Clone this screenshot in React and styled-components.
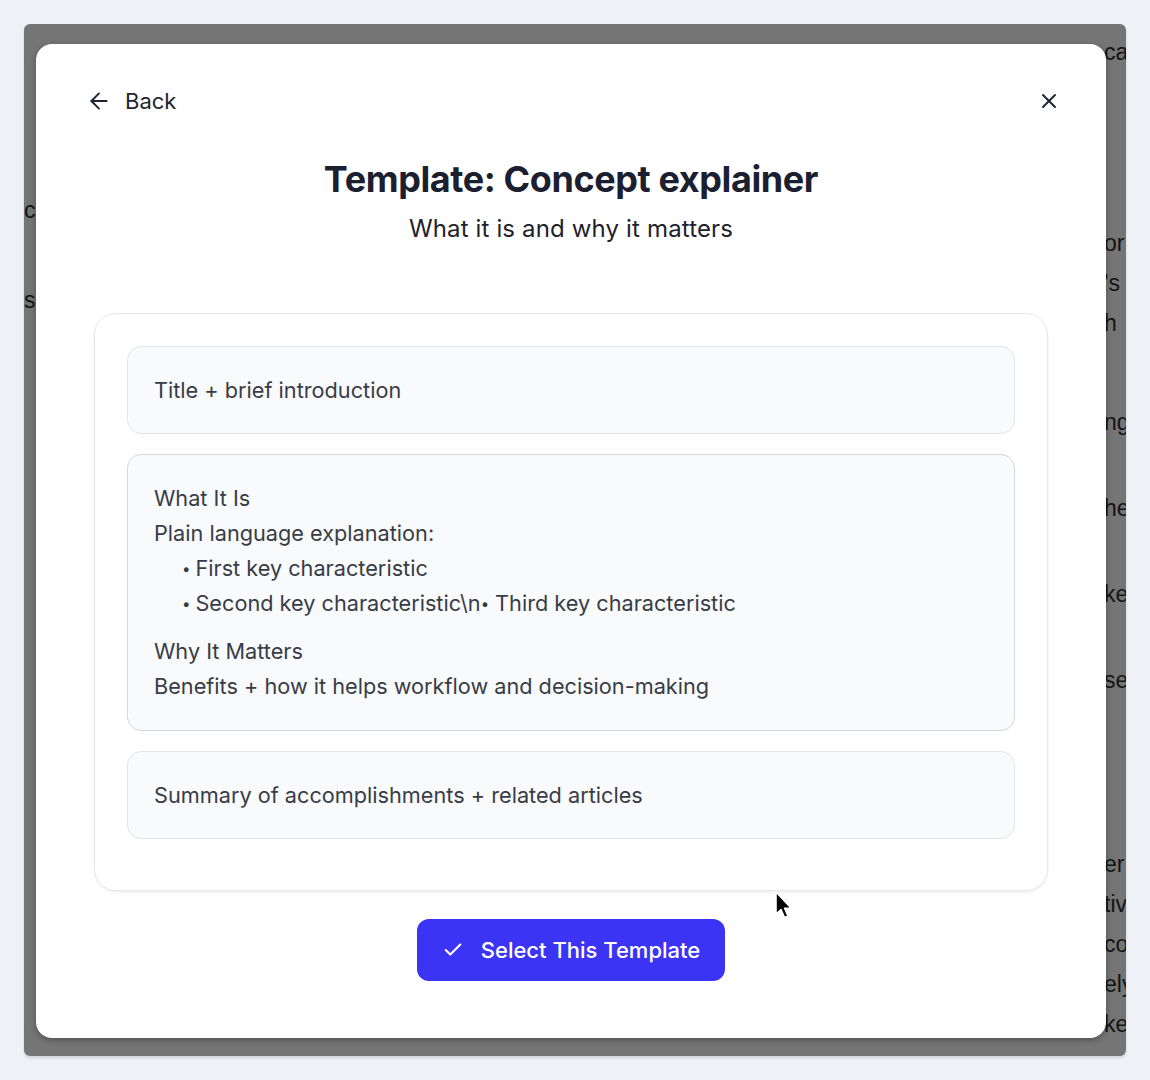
import React from 'react';
import styled, { createGlobalStyle } from 'styled-components';
import { ArrowLeft, X, Check } from 'lucide-react';

const GlobalStyle = createGlobalStyle`
  body {
    margin: 0;
    background: #eef2f7;
    font-family: Inter, "Noto Sans", sans-serif;
  }
`;

const Page = styled.div`
  position: relative;
  height: 1080px;
  padding: 24px 24px 0;
  box-sizing: border-box;
`;

const Window = styled.div`
  position: relative;
  height: 1032px;
  border-radius: 6px;
  background: #757575;
  overflow: hidden;
  box-shadow: 0 2px 3px rgba(0, 0, 0, 0.12);
`;

// page behind the dimmed overlay, only its edges peek out
const Backdrop = styled.div`
  display: flex;
  justify-content: space-between;
  height: 100%;
  font-family: "Liberation Sans", Arial, sans-serif;
  font-size: 23px;
  color: #141414;
`;

const BackColumn = styled.div`
  display: flex;
  flex-direction: column;
  width: ${(p) => p.$width}px;
  margin: ${(p) => p.$margin};
  overflow: hidden;
`;

const BackLine = styled.div`
  height: 40px;
  line-height: 40px;
  margin-top: ${(p) => p.$gap || 0}px;
  white-space: nowrap;
`;

const Modal = styled.div`
  position: absolute;
  left: 12px;
  top: 20px;
  width: 1070px;
  height: 994px;
  box-sizing: border-box;
  background: #fff;
  border-radius: 16px;
  box-shadow: 0 2px 6px rgba(0, 0, 0, 0.3);
  padding: 36px 58px 0;
  display: flex;
  flex-direction: column;
  align-items: center;
`;

const Header = styled.div`
  align-self: stretch;
  display: flex;
  align-items: center;
  justify-content: space-between;
  height: 42px;
  margin: 0 -13px 0 -8px;
`;

const BackButton = styled.button`
  display: flex;
  align-items: center;
  gap: 13px;
  border: none;
  background: none;
  padding: 0;
  font-family: inherit;
  font-size: 22px;
  color: #1f2433;
  cursor: pointer;
`;

const CloseButton = styled.button`
  display: flex;
  border: none;
  background: none;
  padding: 0;
  color: #1f2433;
  cursor: pointer;
`;

const Title = styled.h1`
  margin: 35px 0 0;
  font-size: 36px;
  line-height: 44px;
  font-weight: 700;
  color: #1b2030;
  letter-spacing: -0.4px;
`;

const Subtitle = styled.p`
  margin: 13px 0 0;
  font-size: 24px;
  line-height: 30px;
  letter-spacing: 0.15px;
  color: #1f222a;
`;

const Card = styled.div`
  align-self: stretch;
  margin-top: 69px;
  padding: 32px 32px 51px;
  border: 1px solid #e5e7eb;
  border-radius: 22px;
  box-shadow: 0 2px 3px rgba(0, 0, 0, 0.06);
  display: flex;
  flex-direction: column;
  gap: 20px;
`;

const Section = styled.div`
  min-height: ${(p) => (p.$tall ? 'auto' : '86px')};
  padding: ${(p) => (p.$tall ? '26px 26px' : '0 26px')};
  display: flex;
  flex-direction: column;
  justify-content: center;
  background: #f9fafb;
  border: 1px solid ${(p) => (p.$active ? '#d4d7de' : '#e3e5ea')};
  border-radius: 14px;
  font-size: 21.7px;
  line-height: 35px;
  color: #383c47;
`;

const Line = styled.div`
  margin-top: ${(p) => p.$gap || 0}px;
  padding-left: ${(p) => (p.$bullet ? 28 : 0)}px;
`;

const Dot = styled.span`
  font-size: 15px;
  vertical-align: 2px;
  margin-right: ${(p) => (p.$tight ? 6 : 5)}px;
`;

const SelectButton = styled.button`
  margin-top: 28px;
  width: 308px;
  height: 62px;
  display: flex;
  align-items: center;
  justify-content: center;
  gap: 17px;
  border: none;
  border-radius: 12px;
  background: #3b34f5;
  color: #fff;
  font-family: inherit;
  font-size: 22px;
  font-weight: 500;
  cursor: pointer;
`;

const Cursor = styled.svg`
  position: absolute;
  left: 773px;
  top: 890px;
`;

const leftLines = [
  { text: 'c', gap: 166 },
  { text: 's', gap: 50 },
];

const rightLines = [
  { text: 'ca', gap: 8 },
  { text: 'or', gap: 151 },
  { text: "'s" },
  { text: 'h' },
  { text: 'ng', gap: 59 },
  { text: 'he', gap: 46 },
  { text: 'ke', gap: 46 },
  { text: 'se', gap: 46 },
  { text: 'er', gap: 144 },
  { text: 'tiv' },
  { text: 'co' },
  { text: 'ely' },
  { text: 'ke' },
];

const App = () => (
  <Page>
    <GlobalStyle />
    <Window>
      <Backdrop>
        <BackColumn $width={40} $margin="0 0 0 0">
          {leftLines.map((l, i) => (
            <BackLine key={i} $gap={l.gap}>
              {l.text}
            </BackLine>
          ))}
        </BackColumn>
        <BackColumn $width={60} $margin="0 -38px 0 0">
          {rightLines.map((l, i) => (
            <BackLine key={i} $gap={l.gap}>
              {l.text}
            </BackLine>
          ))}
        </BackColumn>
      </Backdrop>

      <Modal>
        <Header>
          <BackButton>
            <ArrowLeft size={26} strokeWidth={1.8} />
            Back
          </BackButton>
          <CloseButton aria-label="Close">
            <X size={24} strokeWidth={2} />
          </CloseButton>
        </Header>

        <Title>Template: Concept explainer</Title>
        <Subtitle>What it is and why it matters</Subtitle>

        <Card>
          <Section>Title + brief introduction</Section>
          <Section $tall $active>
            <Line>What It Is</Line>
            <Line>Plain language explanation:</Line>
            <Line $bullet>
              <Dot>•</Dot>First key characteristic
            </Line>
            <Line $bullet>
              <Dot>•</Dot>Second key characteristic\n<Dot $tight>•</Dot>Third key characteristic
            </Line>
            <Line $gap={13}>Why It Matters</Line>
            <Line>Benefits + how it helps workflow and decision-making</Line>
          </Section>
          <Section>Summary of accomplishments + related articles</Section>
        </Card>

        <SelectButton>
          <Check size={22} strokeWidth={2.2} />
          Select This Template
        </SelectButton>
      </Modal>
    </Window>

    <Cursor width="22" height="32" viewBox="0 0 22 32">
      <path
        d="M3 2 L3 24 L8 19.5 L11.5 27.5 L15 26 L11.6 18.3 L18 18 Z"
        fill="#000"
        stroke="#fff"
        strokeWidth="1.6"
        strokeLinejoin="round"
      />
    </Cursor>
  </Page>
);

export default App;
